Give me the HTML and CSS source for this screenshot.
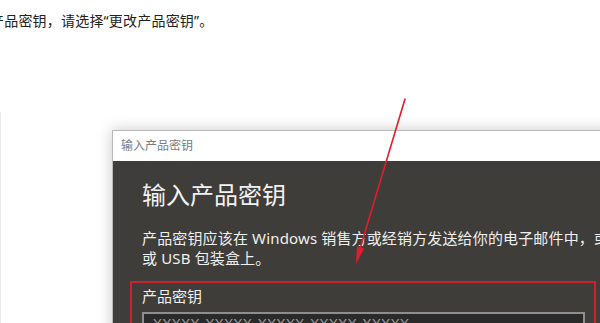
FILE: index.html
```html
<!DOCTYPE html>
<html lang="zh-CN">
<head>
<meta charset="utf-8">
<title>输入产品密钥</title>
<link rel="stylesheet" href="styles.css">
</head>
<body>
<p class="intro">产品密钥，请选择“更改产品密钥”。</p>
<div class="content">
  <div class="dialog">
    <div class="titlebar">输入产品密钥</div>
    <div class="dialog-body">
      <h1 class="heading">输入产品密钥</h1>
      <p class="desc">产品密钥应该在 Windows 销售方或经销方发送给你的电子邮件中，或<br>或 USB 包装盒上。</p>
      <div class="highlight">
        <div class="label">产品密钥</div>
        <div class="keybox">XXXXX-XXXXX-XXXXX-XXXXX-XXXXX</div>
      </div>
    </div>
  </div>
</div>
<svg class="arrow" width="600" height="323" viewBox="0 0 600 323" aria-hidden="true">
  <line x1="405" y1="99" x2="359" y2="252" stroke="#e31b2b" stroke-width="1.6" stroke-linecap="round"/>
  <polygon points="356,264 364.2,248.4 357.0,246.4" fill="#e31b2b"/>
</svg>
</body>
</html>
```
FILE: styles.css
```css
html, body {
  margin: 0;
  padding: 0;
}
body {
  width: 600px;
  height: 323px;
  overflow: hidden;
  position: relative;
  background: #ffffff;
  font-family: "Noto Sans", "Noto Sans CJK SC", sans-serif;
}
.intro {
  margin: 0 0 0 -10px;
  padding-top: 11px;
  font-size: 14px;
  letter-spacing: 0.2px;
  line-height: 20px;
  color: #222222;
  white-space: nowrap;
}
.content {
  margin-top: 81px;
  border-left: 1px solid #ececec;
  height: 210px;
  padding-top: 18px;
  overflow: hidden;
}
.dialog {
  margin-left: 111px;
  width: 500px;
  border-top: 1px solid #b9b9b9;
  border-left: 1px solid #b9b9b9;
  box-shadow: 0 0 14px rgba(0, 0, 0, 0.22);
}
.titlebar {
  height: 30px;
  line-height: 30px;
  padding-left: 8px;
  background: #ffffff;
  font-size: 12px;
  color: #7b7b7b;
  white-space: nowrap;
}
.dialog-body {
  background: #3e3d3a;
  padding: 18px 0 40px 29px;
}
.heading {
  margin: 0;
  font-size: 24px;
  line-height: 32px;
  font-weight: normal;
  color: #f2f2f2;
  white-space: nowrap;
}
.desc {
  margin: 17px 0 0 0;
  font-size: 15px;
  letter-spacing: 0.15px;
  line-height: 20px;
  color: #f0f0f0;
  white-space: nowrap;
}
.highlight {
  margin: 13px 0 0 -12px;
  width: 452px;
  border: 2px solid #cc2230;
  padding: 3px 0 10px 10px;
}
.label {
  font-size: 15px;
  line-height: 20px;
  color: #f0f0f0;
}
.keybox {
  margin-top: 6px;
  width: 443px;
  height: 30px;
  border: 2px solid #8e8e8e;
  background: #2a2a2a;
  padding: 0 0 0 9px;
  font-size: 15px;
  letter-spacing: 0.6px;
  line-height: 18px;
  color: #9a9a9a;
  box-sizing: border-box;
  white-space: nowrap;
  overflow: hidden;
}
.arrow {
  position: absolute;
  left: 0;
  top: 0;
  pointer-events: none;
}
```
